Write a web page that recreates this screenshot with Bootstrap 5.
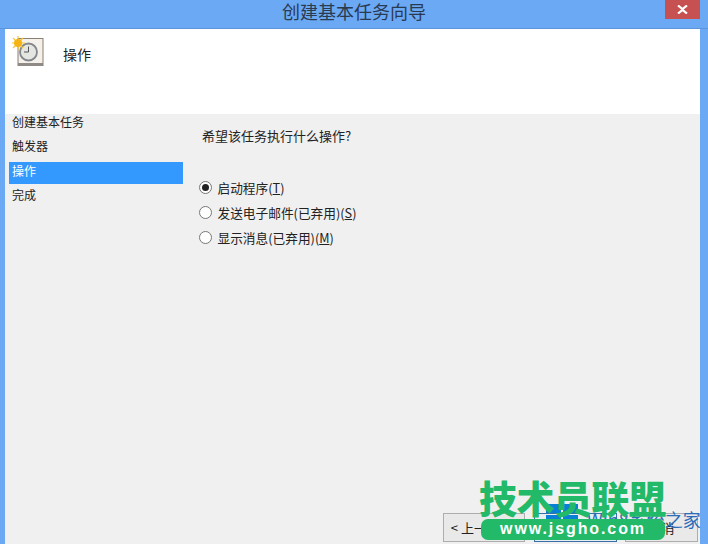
<!DOCTYPE html>
<html lang="zh"><head><meta charset="utf-8">
<link href="https://cdn.jsdelivr.net/npm/bootstrap@5.3.0/dist/css/bootstrap.min.css" rel="stylesheet">
<style>
html,body{margin:0;height:544px;overflow:hidden;background:#6ba9f5}
body{font-family:"Noto Sans CJK SC","Liberation Sans",sans-serif;color:#222;font-size:12px}
.wiz-win{width:708px;height:544px;position:relative;display:flex;flex-direction:column;overflow:hidden}
.wiz-title{height:29px;flex:none;background:#6ba9f5;border-bottom:1px solid #5d95da;position:relative;font-size:18px;line-height:22px;color:#2a3a50;padding-left:282px}
.wiz-close{position:absolute;left:665px;top:0;width:35px;height:19px;background:#c75050;color:#fff;display:flex;align-items:center;justify-content:center}
.wiz-body{flex:1;margin:0 8px 0 5px;display:flex;flex-direction:column;min-height:0}
.wiz-head{height:85px;flex:none;background:#fff;padding:7px 0 0 7px;gap:19px}
.wiz-head span{font-size:14px;margin-top:8px;line-height:20px}
.wiz-main{flex:1;background:#f0f0f0;min-height:0;position:relative}
.wiz-side{width:174px;box-sizing:content-box;flex:none;padding:0 0 0 4px}
.wiz-step{height:22px;margin-bottom:2.2px;padding-left:3px;line-height:16px;font-size:12px}
.wiz-step.on{background:#3399ff;color:#fff;line-height:18px}
.wiz-right{flex:1;padding:13px 0 0 16px}
.wiz-q{font-size:13px;line-height:17px;margin-left:3px;margin-bottom:31px}
.wiz-opt{height:25px;gap:5.5px;font-size:12.7px}
.wiz-dot{width:13px;height:13px;border-radius:50%;border:1px solid #777;background:#fff;display:flex;align-items:center;justify-content:center;flex:none}
.wiz-dot i{width:7px;height:7px;border-radius:50%;background:#222;display:block}
.wiz-btns{position:absolute;left:438px;top:399px;gap:9px;font-size:13px}
.wiz-btn{width:82px;height:29px;border:1px solid #adadad;background:#e9e9e9;display:flex;align-items:center;justify-content:center;color:#222;box-sizing:border-box}
.wiz-btn.def{width:83px;border-color:#3a6ea8;background:#e9eef3}
.wiz-btn.last{width:73px;margin-left:-1px}
.wm-big{position:absolute;left:479px;top:470px;font-size:38px;line-height:54px;font-weight:900;color:#22b968;letter-spacing:-.6px;white-space:nowrap}
.wm-pill{position:absolute;left:481px;top:519px;width:184px;height:21px;border-radius:7px;background:#22b968;color:#fff;font:700 16px/20px "Liberation Sans",sans-serif;text-align:center;letter-spacing:1.9px}
.wm-site{position:absolute;left:587px;top:507px;font-size:18px;line-height:24px;color:#2b6cb8;white-space:nowrap}
.wm-logo{position:absolute;left:546px;top:504px;width:32px;height:20px;display:grid;grid-template-columns:1fr 1fr;gap:2px}
.wm-logo b{background:#0a7fd6;display:block}
</style></head><body>
<div class="wiz-win">
<div class="wiz-title">创建基本任务向导
<div class="wiz-close"><svg width="11" height="9" viewBox="0 0 11 9"><path d="M1 .5 5.500 4 10 .5M1 8.500 5.500 5 10 8.500" fill="none" stroke="#fff" stroke-width="2.200"/></svg></div></div>
<div class="wiz-body">
<div class="wiz-head d-flex align-items-start">
<svg width="32" height="32" viewBox="0 0 32 32" class="flex-none">
<rect x="6" y="2.500" width="25" height="27" fill="#f3f1ea" stroke="#8c7f75"/>
<rect x="6" y="27" width="25" height="3" fill="#8f8a85"/>
<circle cx="16.500" cy="16" r="8.500" fill="#e4e6e2" stroke="#85868c" stroke-width="1.800"/>
<path d="M16.500 10.500V16H12" fill="none" stroke="#555" stroke-width="1"/>
<path d="M6 0V14M-1 7H13M1 2 11 12M11 2 1 12" stroke="#f6c63a" stroke-width="1.200"/>
<circle cx="6" cy="7" r="4" fill="#f5b414"/>
</svg>
<span>操作</span></div>
<div class="wiz-main d-flex">
<div class="wiz-side">
<div class="wiz-step">创建基本任务</div>
<div class="wiz-step">触发器</div>
<div class="wiz-step on">操作</div>
<div class="wiz-step">完成</div>
</div>
<div class="wiz-right">
<div class="wiz-q">希望该任务执行什么操作?</div>
<div class="wiz-opt d-flex align-items-center"><span class="wiz-dot"><i></i></span><span>启动程序(<u>T</u>)</span></div>
<div class="wiz-opt d-flex align-items-center"><span class="wiz-dot"></span><span>发送电子邮件(已弃用)(<u>S</u>)</span></div>
<div class="wiz-opt d-flex align-items-center"><span class="wiz-dot"></span><span>显示消息(已弃用)(<u>M</u>)</span></div>
</div>
<div class="wiz-btns d-flex">
<div class="wiz-btn">&lt; 上一步(B)</div>
<div class="wiz-btn def">下一步(N) &gt;</div>
<div class="wiz-btn last">取消</div>
</div>
</div>
</div>
<div class="wm-logo"><b></b><b></b><b></b><b></b></div>
<div class="wm-site">Win8系统之家</div>
<div class="wm-big">技术员联盟</div>
<div class="wm-pill">www.jsgho.com</div>
</div>
</body></html>
